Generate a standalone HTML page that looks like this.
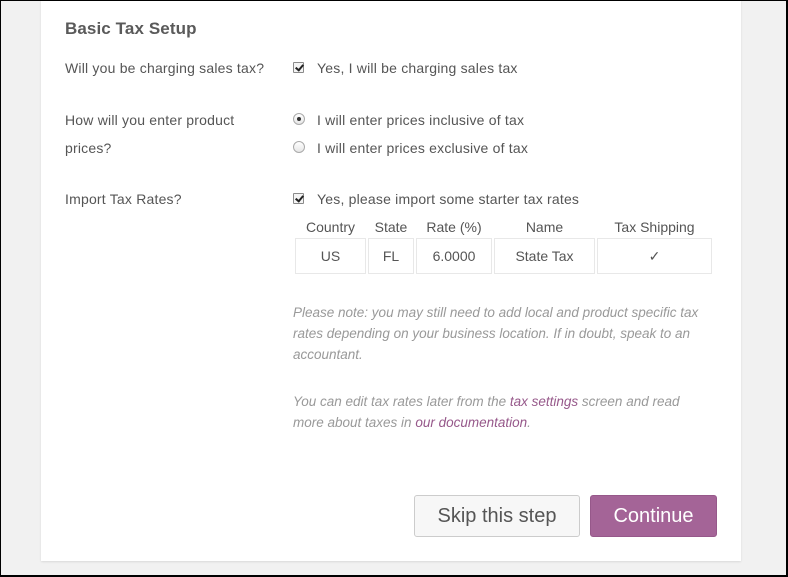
<!DOCTYPE html>
<html><head><meta charset="utf-8"><style>
*{margin:0;padding:0;box-sizing:border-box}
body{width:788px;height:577px;background:#f1f1f1;font-family:"Liberation Sans",sans-serif;color:#555;position:relative;overflow:hidden}
.frame{position:absolute;left:0;top:0;width:788px;height:577px;border:1px solid #000;border-right-width:2px;border-bottom-width:2px;pointer-events:none}
.card{position:absolute;left:41px;top:0;width:700px;height:561px;background:#fff;box-shadow:0 1px 2px rgba(0,0,0,.1)}
.t{position:absolute;font-size:14px;letter-spacing:.2px;white-space:nowrap;line-height:18px}
h1{position:absolute;left:65px;top:19px;font-size:17px;font-weight:bold;color:#5a5a5a;letter-spacing:.1px}
.cb{position:absolute;width:11px;height:11px;border:1px solid #8a8a8a;background:#f4f4f4;border-radius:1px}
.cb::after{content:"";position:absolute;left:3px;top:0px;width:3px;height:6px;border:solid #222;border-width:0 2px 2px 0;transform:rotate(40deg)}
.rd{position:absolute;width:12px;height:12px;border:1px solid #aaa;border-radius:50%;background:linear-gradient(#fff,#e6e6e6)}
.rd.on::after{content:"";position:absolute;left:3px;top:3px;width:4px;height:4px;border-radius:50%;background:#333}
table{position:absolute;left:293px;top:216px;border-collapse:separate;border-spacing:2px 0}
th{font-weight:normal;font-size:14px;height:22px;padding:0 1px;color:#555}
td{border:1px solid #e8e8e8;height:36px;text-align:center;font-size:14px;color:#555}
.note{position:absolute;left:293px;font-size:13.5px;font-style:italic;color:#999;line-height:21px;width:430px}
.note a{color:#96588a;text-decoration:none}
.btn{position:absolute;top:495px;height:42px;font-size:20px;line-height:40px;text-align:center;border-radius:3px}
</style></head><body>
<div class="card"></div>
<h1>Basic Tax Setup</h1>
<div class="t" style="left:65px;top:59px">Will you be charging sales tax?</div>
<div class="cb" style="left:293px;top:62px"></div>
<div class="t" style="left:317px;top:59px">Yes, I will be charging sales tax</div>
<div class="t" style="left:65px;top:111px">How will you enter product</div>
<div class="t" style="left:65px;top:139px">prices?</div>
<div class="rd on" style="left:293px;top:113px"></div>
<div class="t" style="left:317px;top:111px">I will enter prices inclusive of tax</div>
<div class="rd" style="left:293px;top:141px"></div>
<div class="t" style="left:317px;top:139px">I will enter prices exclusive of tax</div>
<div class="t" style="left:65px;top:190px">Import Tax Rates?</div>
<div class="cb" style="left:293px;top:193px"></div>
<div class="t" style="left:317px;top:190px">Yes, please import some starter tax rates</div>
<table>
<tr><th style="width:71px">Country</th><th style="width:46px">State</th><th style="width:76px">Rate (%)</th><th style="width:101px">Name</th><th style="width:115px">Tax Shipping</th></tr>
<tr><td>US</td><td>FL</td><td>6.0000</td><td>State Tax</td><td>✓</td></tr>
</table>
<div class="note" style="top:302px">Please note: you may still need to add local and product specific tax rates depending on your business location. If in doubt, speak to an accountant.</div>
<div class="note" style="top:391px;width:405px">You can edit tax rates later from the <a>tax settings</a> screen and read more about taxes in <a>our documentation</a>.</div>
<div class="btn" style="left:414px;width:166px;background:#f7f7f7;border:1px solid #ccc;color:#555">Skip this step</div>
<div class="btn" style="left:590px;width:127px;background:#a46497;border:1px solid #96588a;color:#fff">Continue</div>
<div class="frame"></div>
</body></html>
